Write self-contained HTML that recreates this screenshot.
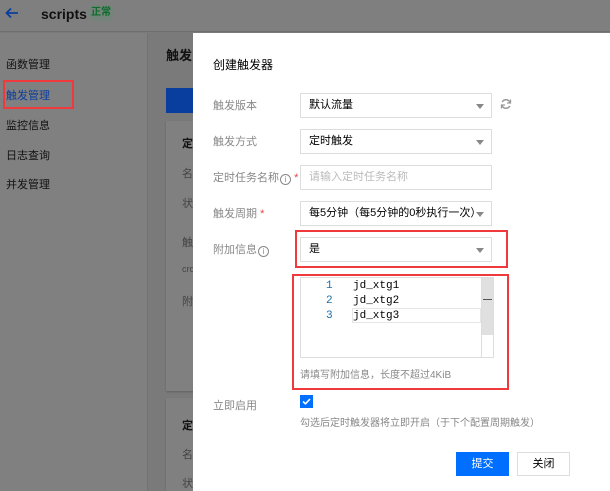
<!DOCTYPE html>
<html><head><meta charset="utf-8"><style>
*{margin:0;padding:0;box-sizing:border-box}
body{width:610px;height:491px;overflow:hidden;position:relative;background:#7a7a7a;font-family:"Liberation Sans","Noto Sans CJK SC",sans-serif;font-size:12px;color:#000}
.a{position:absolute;white-space:nowrap}
.hdr{left:0;top:0;width:610px;height:32px;background:#7f7f7f;border-bottom:1px solid #6e6e6e}
.side{left:0;top:33px;width:148px;height:458px;background:#808080;border-right:1px solid #737373}
.side div{position:absolute;left:6px;font-size:11px;color:#111}
.card{background:#808080;box-shadow:0 1px 2px rgba(0,0,0,.2)}
.modal{left:193px;top:33px;width:417px;height:458px;background:#fff}
.lbl{left:213px;color:#888;font-size:11px}
.inp{left:300px;width:192px;height:25px;border:1px solid #ddd;background:#fff;font-size:11px;line-height:23px;padding-left:8px;color:#000;overflow:hidden}
.arr{position:absolute;right:7px;top:10px;width:0;height:0;border-left:4px solid transparent;border-right:4px solid transparent;border-top:5px solid #888}
.red{border:2px solid #f0393c}
.req{color:#e54545}
.i{display:inline-block;width:11px;height:11px;border:1px solid #888;border-radius:50%;font-size:8px;text-align:center;line-height:9px;vertical-align:-1px;margin-left:1px}
.mono{font-family:"Liberation Mono","DejaVu Sans Mono",monospace;font-size:11px}
</style></head><body>
<div class="a hdr">
<svg class="a" style="left:5px;top:7px" width="14" height="12" viewBox="0 0 14 12"><path d="M13 6H2M6 1.5L1.5 6 6 10.5" stroke="#0a3e9e" stroke-width="1.8" fill="none"/></svg>
<div class="a" style="left:41px;top:6px;font-size:14px;font-weight:bold;color:#111">scripts</div>
<div class="a" style="left:88px;top:5px;width:26px;height:16px;background:#73857a;border-radius:8px;color:#0e6b2c;font-size:10px;text-align:center;line-height:16px;font-weight:bold">正常</div>
</div>
<div class="a side">
<div style="top:23px">函数管理</div>
<div style="top:54px;color:#0a3e9e">触发管理</div>
<div style="top:84px">监控信息</div>
<div style="top:114px">日志查询</div>
<div style="top:143px">并发管理</div>
</div>
<div class="a red" style="left:3px;top:80px;width:71px;height:29px"></div>
<div class="a" style="left:166px;top:45px;font-size:13px;font-weight:bold;color:#111">触发</div>
<div class="a" style="left:166px;top:88px;width:30px;height:25px;background:#0a3e9e"></div>
<div class="a card" style="left:166px;top:121px;width:30px;height:270px"></div>
<div class="a card" style="left:166px;top:398px;width:30px;height:93px"></div>
<div class="a" style="left:182px;top:135px;font-weight:bold;color:#111;font-size:11px">定</div>
<div class="a" style="left:182px;top:165px;color:#444;font-size:11px">名</div>
<div class="a" style="left:182px;top:195px;color:#444;font-size:11px">状</div>
<div class="a" style="left:182px;top:234px;color:#444;font-size:11px">触</div>
<div class="a" style="left:182px;top:264px;color:#444;font-size:9px">cro</div>
<div class="a" style="left:182px;top:293px;color:#444;font-size:11px">附</div>
<div class="a" style="left:182px;top:417px;font-weight:bold;color:#111;font-size:11px">定</div>
<div class="a" style="left:182px;top:446px;color:#444;font-size:11px">名</div>
<div class="a" style="left:182px;top:475px;color:#444;font-size:11px">状</div>

<div class="a modal"></div>
<div class="a" style="left:213px;top:56px;font-size:12px;color:#000">创建触发器</div>

<div class="a lbl" style="top:97px">触发版本</div>
<div class="a inp" style="top:93px">默认流量<span class="arr"></span></div>
<svg class="a" style="left:500px;top:98px" width="12" height="12" viewBox="0 0 12 12"><path d="M10 4.5A4.3 4.3 0 0 0 2.2 4M2 7.5A4.3 4.3 0 0 0 9.8 8" stroke="#999" stroke-width="1.5" fill="none"/><path d="M10.5 1.5v3.5H7M1.5 10.5V7H5" stroke="#999" stroke-width="1.3" fill="none"/></svg>
<div class="a lbl" style="top:133px">触发方式</div>
<div class="a inp" style="top:129px">定时触发<span class="arr"></span></div>
<div class="a lbl" style="top:169px">定时任务名称<span class="i">i</span> <span class="req">*</span></div>
<div class="a inp" style="top:165px;color:#bbb">请输入定时任务名称</div>
<div class="a lbl" style="top:205px">触发周期 <span class="req">*</span></div>
<div class="a inp" style="top:201px">每5分钟（每5分钟的0秒执行一次）<span class="arr"></span></div>
<div class="a lbl" style="top:241px">附加信息<span class="i">i</span></div>
<div class="a inp" style="top:237px">是<span class="arr"></span></div>
<div class="a red" style="left:295px;top:230px;width:213px;height:38px"></div>

<div class="a" style="left:300px;top:277px;width:194px;height:81px;border:1px solid #ddd"></div>
<div class="a" style="left:481px;top:278px;width:12px;height:79px;border-left:1px solid #ddd"></div>
<div class="a" style="left:482px;top:278px;width:11px;height:57px;background:#e0e0e0"></div>
<div class="a" style="left:483px;top:299px;width:9px;height:1px;background:#555"></div>
<div class="a" style="left:352px;top:308px;width:129px;height:15px;border:1px solid #e6e6e6"></div>
<div class="a mono" style="left:326px;top:279px;color:#1a6ea8;line-height:15px">1<br>2<br>3</div>
<div class="a mono" style="left:353px;top:279px;line-height:15px">jd_xtg1<br>jd_xtg2<br>jd_xtg3</div>
<div class="a" style="left:300px;top:366px;color:#888;font-size:10px">请填写附加信息，长度不超过4KiB</div>
<div class="a red" style="left:292px;top:274px;width:217px;height:116px"></div>

<div class="a lbl" style="top:397px">立即启用</div>
<div class="a" style="left:300px;top:395px;width:13px;height:13px;background:#006eff"><svg width="13" height="13" viewBox="0 0 13 13"><path d="M3 6.5l2.5 2.3L10 4" stroke="#fff" stroke-width="1.6" fill="none"/></svg></div>
<div class="a" style="left:300px;top:414px;color:#888;font-size:10px">勾选后定时触发器将立即开启（于下个配置周期触发）</div>

<div class="a" style="left:456px;top:452px;width:53px;height:24px;background:#006eff;color:#fff;text-align:center;line-height:24px;font-size:11px">提交</div>
<div class="a" style="left:517px;top:452px;width:53px;height:24px;border:1px solid #ddd;text-align:center;line-height:22px;font-size:11px">关闭</div>
</body></html>
